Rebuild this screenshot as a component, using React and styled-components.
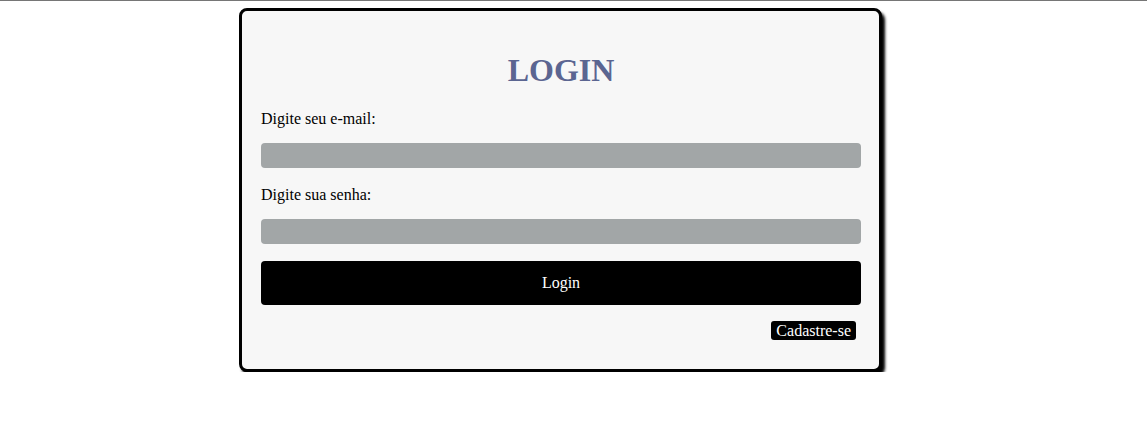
import React from 'react';
import styled, { createGlobalStyle } from 'styled-components';

const GlobalStyle = createGlobalStyle`
    body {
        margin: 0;
        background: #ffffff;
        font-family: "Liberation Serif", "Times New Roman", serif;
    }
`;

const Page = styled.div`
    border-top: 1px solid #767676;
    padding: 7px 0 0 239px;
`;

const Card = styled.form`
    width: 600px;
    padding: 19px 18px 29px 19px;
    background-color: #f7f7f7;
    border: 3px solid #000;
    border-radius: 8px;
    box-shadow: 3px 4px 3px #000;
    display: flex;
    flex-direction: column;
`;

const Title = styled.h1`
    margin: 21.5px 0;
    text-align: center;
    font-size: 32px;
    font-weight: bold;
    color: #5b6591;
`;

const Label = styled.label`
    display: block;
    font-size: 16px;
    line-height: 18px;
    color: #000;
    margin-top: ${(p) => (p.$first ? '0' : '18px')};
    margin-bottom: 15px;
`;

const Input = styled.input`
    box-sizing: border-box;
    width: 100%;
    height: 25px;
    border: none;
    border-radius: 4px;
    background-color: #a2a6a7;
    padding: 0 8px;
    outline: none;
`;

const LoginButton = styled.button`
    margin-top: 17px;
    height: 44px;
    width: 100%;
    border: none;
    border-radius: 4px;
    background-color: #000;
    color: #fff;
    font-family: "Liberation Serif", "Times New Roman", serif;
    font-size: 16px;
`;

const Footer = styled.div`
    margin-top: 16px;
    display: flex;
    justify-content: flex-end;
    padding-right: 5px;
`;

const SignUp = styled.button`
    height: 19px;
    padding: 0 5px;
    border: none;
    border-radius: 3px;
    background-color: #000;
    color: #fff;
    font-family: "Liberation Serif", "Times New Roman", serif;
    font-size: 16px;
    line-height: 19px;
`;

function App() {
    return (
        <>
            <GlobalStyle />
            <Page>
                <Card onSubmit={(e) => e.preventDefault()}>
                    <Title>LOGIN</Title>
                    <Label $first>Digite seu e-mail:</Label>
                    <Input type='email' />
                    <Label>Digite sua senha:</Label>
                    <Input type='password' />
                    <LoginButton type='submit'>Login</LoginButton>
                    <Footer>
                        <SignUp type='button'>Cadastre-se</SignUp>
                    </Footer>
                </Card>
            </Page>
        </>
    );
}

export default App;
